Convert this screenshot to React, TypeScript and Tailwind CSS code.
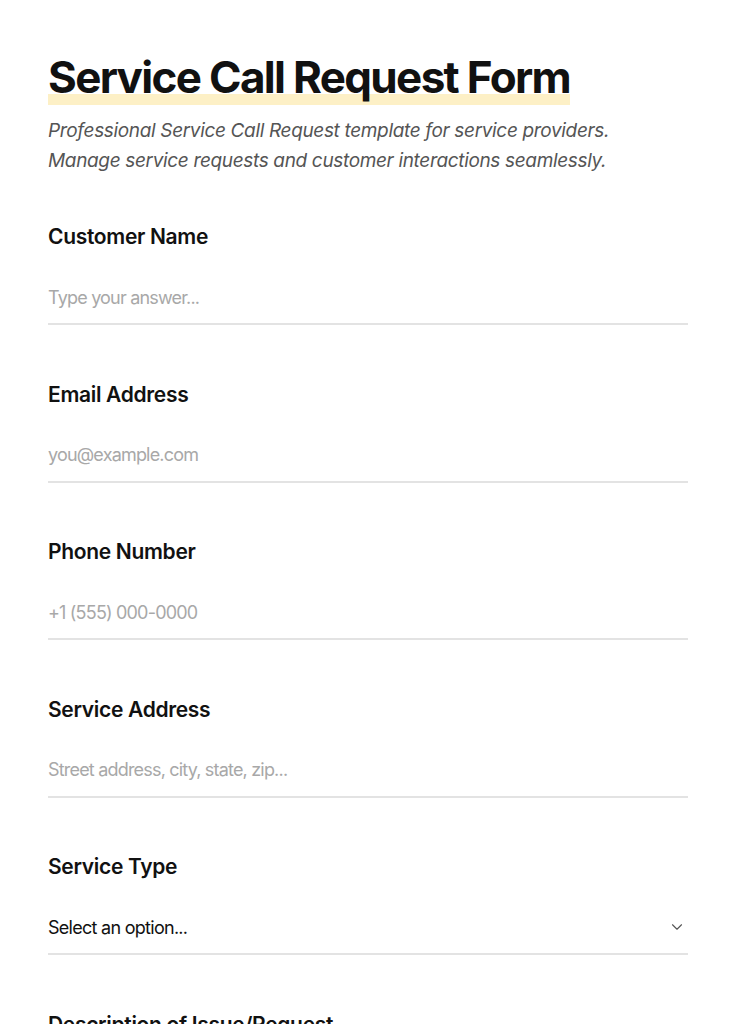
import { ChevronDown } from 'lucide-react';

const fields = [
  { label: 'Customer Name', placeholder: 'Type your answer...' },
  { label: 'Email Address', placeholder: 'you@example.com' },
  { label: 'Phone Number', placeholder: '+1 (555) 000-0000' },
  { label: 'Service Address', placeholder: 'Street address, city, state, zip...' },
];

export default function App() {
  return (
    <div className="min-h-screen bg-white font-['Inter',sans-serif] text-[#111111]">
      <div className="px-12 pt-[49px]">
        <h1 className="text-[44px] font-bold leading-[56px] tracking-[-0.038em]">
          <span className="relative inline-block">
            <span className="absolute left-0 right-0 bottom-[0px] h-[11px] bg-[#fdf0c6]" />
            <span className="relative">Service Call Request Form</span>
          </span>
        </h1>
        <p className="mt-[11px] text-[19px] italic leading-[30px] text-[#555555] tracking-[-0.018em]">
          Professional Service Call Request template for service providers.
          <br />
          Manage service requests and customer interactions seamlessly.
        </p>

        <div className="mt-[47px] flex flex-col">
          {fields.map((f) => (
            <div key={f.label} className="mb-[55.5px]">
              <label className="block text-[21px] font-semibold leading-[28px] tracking-[-0.015em]">
                {f.label}
              </label>
              <input
                placeholder={f.placeholder}
                className="mt-[22px] block h-[52px] w-full border-b-2 border-[#e3e3e3] bg-transparent pb-[2px] text-[18px] tracking-[-0.045em] text-[#111111] outline-none placeholder:text-[#a8a8a8]"
              />
            </div>
          ))}

          <div className="mb-[55.5px]">
            <label className="block text-[21px] font-semibold leading-[28px] tracking-[-0.015em]">
              Service Type
            </label>
            <div className="mt-[22px] flex h-[52px] w-full items-center justify-between border-b-2 border-[#e3e3e3] pb-[2px] text-[18px] tracking-[-0.04em]">
              <span>Select an option...</span>
              <ChevronDown className="mr-[2px] h-[18px] w-[18px] text-[#555555]" strokeWidth={1.5} />
            </div>
          </div>

          <div>
            <label className="block text-[21px] font-semibold leading-[28px] tracking-[-0.015em]">
              Description of Issue/Request
            </label>
          </div>
        </div>
      </div>
    </div>
  );
}
